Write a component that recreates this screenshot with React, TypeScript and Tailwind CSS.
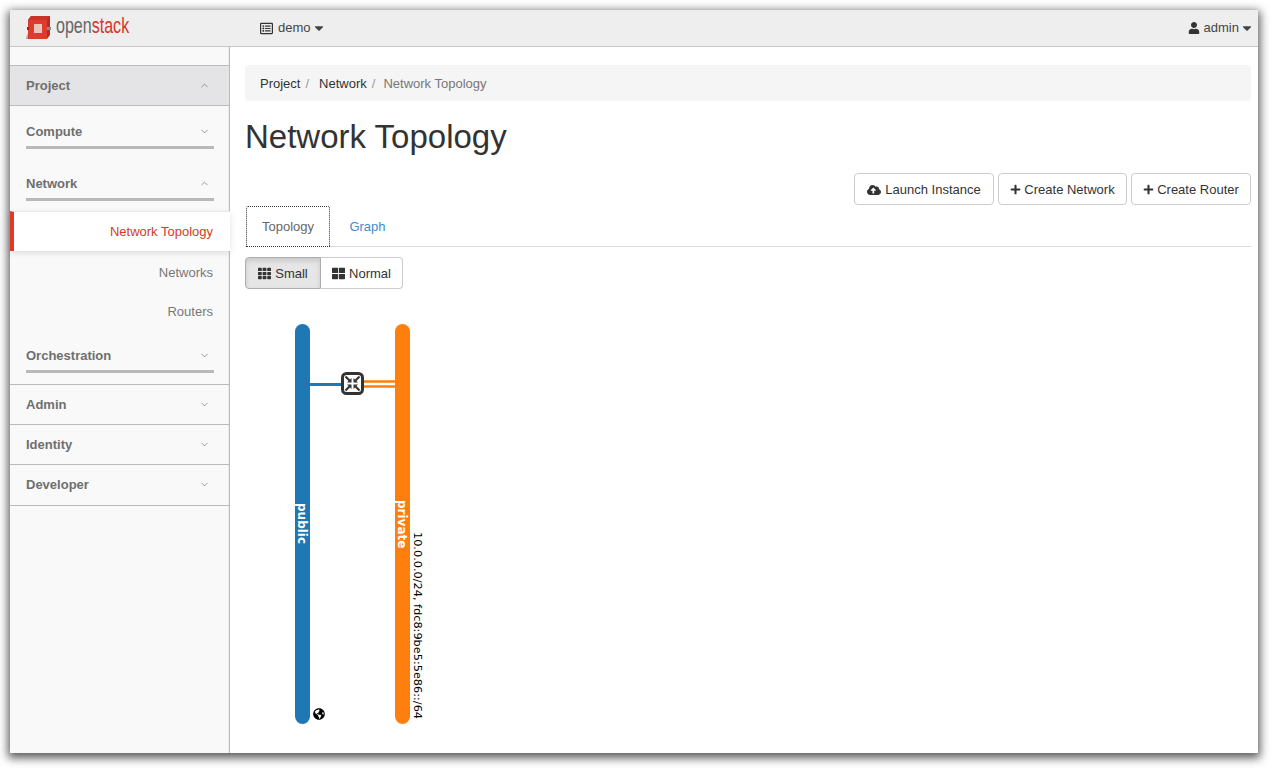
import { ChevronDown, ChevronUp } from 'lucide-react';
import {
  FaCaretDown,
  FaCloudUploadAlt,
  FaGlobeAmericas,
  FaPlus,
  FaRegListAlt,
  FaTh,
  FaThLarge,
  FaUser,
} from 'react-icons/fa';

// ── Logo ──────────────────────────────────────────────────
function Logo() {
  return (
    <svg width="108" height="28" viewBox="0 0 108 28" className="block">
      <path d="M4 6 L7 2 H26 V21 L23 25 H4 Z" fill="#b92a22" />
      <path d="M4 6 H23 V25 H4 Z" fill="#dd3b2c" />
      <path d="M7 2 H26 L23 6 H4 Z" fill="#c9342a" />
      <rect x="10" y="10" width="8" height="9" fill="#ecc4be" />
      <rect x="3" y="13" width="2" height="3" fill="#8f2a22" />
      <rect x="23" y="13" width="4" height="3" fill="#8c8c8c" />
      <path d="M2 24 L4 19 V25 H2 Z" fill="#aaa" />
      <text transform="translate(32 19) scale(0.73 1)" fontFamily="'Liberation Sans', sans-serif" fontSize="22" fill="#666">
        open<tspan fill="#d8352a">stack</tspan>
      </text>
    </svg>
  );
}

// ── Sidebar ───────────────────────────────────────────────
function PanelRow({ label, open }: { label: string; open?: boolean }) {
  return (
    <div className="flex h-5 items-center justify-between pr-[4px]">
      <span className="text-[13px] font-bold text-[#6f6f6f]">{label}</span>
      {open ? (
        <ChevronUp size={11} strokeWidth={1.4} className="mt-[-2px] text-[#666]" />
      ) : (
        <ChevronDown size={11} strokeWidth={1.4} className="mt-[-2px] text-[#666]" />
      )}
    </div>
  );
}

function SubGroup({ label, open, last }: { label: string; open?: boolean; last?: boolean }) {
  return (
    <div className={last ? 'h-[53px] pl-4 pr-[15px] pt-[16px]' : 'h-[52px] pl-4 pr-[15px] pt-[16px]'}>
      <PanelRow label={label} open={open} />
      <div className="mt-[4px] h-[3px] bg-[#b9b9b9]" />
    </div>
  );
}

function Sidebar() {
  return (
    <aside className="w-[220px] shrink-0 border-r border-[#bbbbbb] bg-[#f9f9f9] pt-[18px] shadow-[inset_-1px_0_1px_rgba(0,0,0,0.05)]">
      <div className="h-[41px] border-y border-[#bbbbbb] bg-[#e4e4e6] pl-4 pr-[15px] pt-[10px]">
        <PanelRow label="Project" open />
      </div>
      <SubGroup label="Compute" />
      <SubGroup label="Network" open last />
      <div className="mr-[-1px] flex h-10 items-center justify-end border-l-4 border-t border-l-[#e0392b] border-t-[#e8e8e8] bg-white pr-[17px] text-[13px] text-[#d9392b] shadow-[0_2px_6px_rgba(0,0,0,0.12)]">
        Network Topology
      </div>
      <div className="flex h-[41px] items-center justify-end pr-4 pt-[3px] text-[13px] text-[#777]">Networks</div>
      <div className="flex h-10 items-center justify-end pr-4 text-[13px] text-[#777]">Routers</div>
      <div className="h-[53px] border-b border-[#bbbbbb] pl-4 pr-[15px] pt-[14px]">
        <PanelRow label="Orchestration" />
        <div className="mt-[4px] h-[3px] bg-[#b9b9b9]" />
      </div>
      <div className="h-10 border-b border-[#bbbbbb] pl-4 pr-[15px] pt-[10px]">
        <PanelRow label="Admin" />
      </div>
      <div className="h-10 border-b border-[#bbbbbb] pl-4 pr-[15px] pt-[10px]">
        <PanelRow label="Identity" />
      </div>
      <div className="h-[41px] border-b border-[#bbbbbb] pl-4 pr-[15px] pt-[10px]">
        <PanelRow label="Developer" />
      </div>
    </aside>
  );
}

// ── Topology drawing ──────────────────────────────────────
function Topology() {
  const labelFont = "'DejaVu Sans', sans-serif";
  return (
    <svg width="160" height="420" viewBox="0 0 160 420" className="mt-[26px] ml-[40px] block">
      <rect x="10" y="9" width="15" height="400" rx="7.5" fill="#1f77b4" />
      <rect x="110" y="9" width="15" height="400" rx="7.5" fill="#ff7f0e" />

      <line x1="25" y1="69.5" x2="57" y2="69.5" stroke="#1f77b4" strokeWidth="3" />
      <line x1="78" y1="66.5" x2="110" y2="66.5" stroke="#ff7f0e" strokeWidth="2.5" />
      <line x1="78" y1="71.5" x2="110" y2="71.5" stroke="#ff7f0e" strokeWidth="2.5" />

      <rect x="57.5" y="58.5" width="20" height="20" rx="4" fill="#fff" stroke="#333" strokeWidth="3" />
      {/* four arrows pointing at the centre */}
      <g stroke="#333" strokeWidth="2.2">
        <line x1="60.5" y1="61.5" x2="64.5" y2="65.5" />
        <line x1="74.5" y1="61.5" x2="70.5" y2="65.5" />
        <line x1="60.5" y1="75.5" x2="64.5" y2="71.5" />
        <line x1="74.5" y1="75.5" x2="70.5" y2="71.5" />
      </g>
      <g fill="#333">
        <path d="M66.5 67.5 V63 L62 67.5 Z" />
        <path d="M68.5 67.5 V63 L73 67.5 Z" />
        <path d="M66.5 69.5 V74 L62 69.5 Z" />
        <path d="M68.5 69.5 V74 L73 69.5 Z" />
      </g>

      <text transform="translate(12.5 188) rotate(90)" fontFamily={labelFont} fontSize="12" fontWeight="700" fill="#fff">
        public
      </text>
      <text transform="translate(112.5 185) rotate(90)" fontFamily={labelFont} fontSize="12" fontWeight="700" fill="#fff">
        private
      </text>
      <text transform="translate(128.5 217) rotate(90)" fontFamily={labelFont} fontSize="11.3" fill="#000">
        10.0.0.0/24, fdc8:9be5:5e86::/64
      </text>
      <FaGlobeAmericas x="28" y="393" size={12} color="#000" />
    </svg>
  );
}

// ── Main Page ─────────────────────────────────────────────
export default function App() {
  const btn =
    'flex h-8 items-center justify-center rounded-[4px] border border-[#cccccc] bg-white pt-px text-[13px] text-[#333]';

  return (
    <div className="h-[769px] w-[1274px] overflow-hidden bg-white pl-[10px] pt-[10px] font-['Liberation_Sans',Arial,sans-serif]">
      <div className="flex h-[743px] w-[1248px] flex-col bg-white shadow-[0_3px_9px_2px_rgba(0,0,0,0.65)]">
        {/* Top bar */}
        <header className="flex h-[37px] shrink-0 items-center border-b border-[#c8c8c8] bg-[#eeeeee] text-[13px] text-[#444]">
          <div className="ml-[14px] w-[236px]">
            <Logo />
          </div>
          <div className="flex items-center gap-[5px]">
            <FaRegListAlt size={13} className="text-[#333]" />
            <span>demo</span>
            <FaCaretDown size={14} className="ml-[-4px]" />
          </div>
          <div className="ml-auto mr-[4px] flex items-center gap-[4px]">
            <FaUser size={12} className="text-[#333]" />
            <span>admin</span>
            <FaCaretDown size={14} className="ml-[-3px]" />
          </div>
        </header>

        <div className="flex min-h-0 flex-1">
          <Sidebar />

          <main className="flex-1 pl-[15px] pr-[7px] pt-[18px]">
            <nav className="flex h-9 items-center rounded-[4px] bg-[#f5f5f5] pl-[15px] pt-px text-[13px] text-[#333]">
              <span>Project</span>
              <span className="ml-[5px] text-[#999]">/</span>
              <span className="ml-[10px]">Network</span>
              <span className="ml-[5px] text-[#999]">/</span>
              <span className="ml-[8px] text-[#777]">Network Topology</span>
            </nav>

            <h1 className="mt-[16px] text-[33px] leading-[40px] text-[#333]">Network Topology</h1>

            <div className="mt-[16px] flex justify-end gap-1">
              <button className={`${btn} w-[140px] gap-[4px]`}>
                <FaCloudUploadAlt size={14} />
                Launch Instance
              </button>
              <button className={`${btn} w-[129px] gap-[3px]`}>
                <FaPlus size={11} />
                Create Network
              </button>
              <button className={`${btn} w-[120px] gap-[3px]`}>
                <FaPlus size={11} />
                Create Router
              </button>
            </div>

            {/* Tabs */}
            <div className="mt-px flex h-[41px] border-b border-[#dddddd] text-[13px]">
              <div className="ml-px flex h-[41px] w-[84px] items-center justify-center rounded-t-[2px] border border-dotted border-[#333] bg-white text-[#666]">
                Topology
              </div>
              <div className="flex w-[75px] items-center justify-center pt-px text-[#428bca]">Graph</div>
            </div>

            {/* Size toggle */}
            <div className="mt-[10px] flex h-8 text-[13px] text-[#333]">
              <div className="flex w-[76px] items-center justify-center gap-1 rounded-l-[4px] border border-[#adadad] bg-[#e6e6e6] pt-px shadow-[inset_0_3px_5px_rgba(0,0,0,0.125)]">
                <FaTh size={13} />
                Small
              </div>
              <div className="flex w-[82px] items-center justify-center gap-1 rounded-r-[4px] border border-l-0 border-[#cccccc] bg-white pt-px">
                <FaThLarge size={13} />
                Normal
              </div>
            </div>

            <Topology />
          </main>
        </div>
      </div>
    </div>
  );
}
